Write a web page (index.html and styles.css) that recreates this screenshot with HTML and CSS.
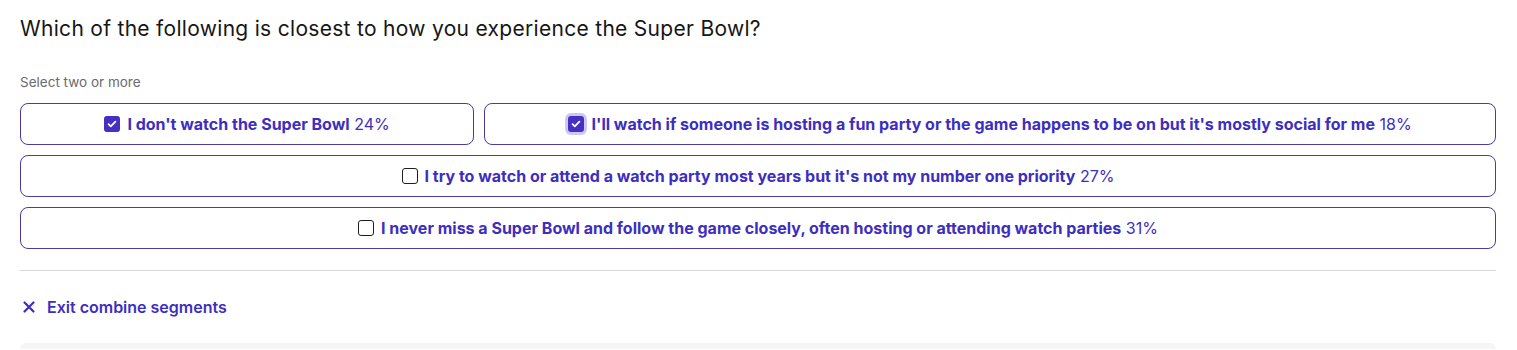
FILE: index.html
```html
<!DOCTYPE html>
<html lang="en">
<head>
<meta charset="utf-8">
<title>Super Bowl question</title>
<link rel="stylesheet" href="styles.css">
</head>
<body>
<main class="panel">
  <h1 class="question">Which of the following is closest to how you experience the Super Bowl?</h1>
  <p class="hint">Select two or more</p>
  <div class="options">
    <label class="option">
      <span class="box checked"><svg viewBox="0 0 16 16" width="16" height="16"><path d="M4.6 8.2l2.2 2.1 4.6-4.6" fill="none" stroke="#fff" stroke-width="1.8" stroke-linecap="round" stroke-linejoin="round"/></svg></span>
      <span class="text"><b>I don't watch the Super Bowl</b> 24%</span>
    </label>
    <label class="option">
      <span class="box checked focus"><svg viewBox="0 0 16 16" width="16" height="16"><path d="M4.6 8.2l2.2 2.1 4.6-4.6" fill="none" stroke="#fff" stroke-width="1.8" stroke-linecap="round" stroke-linejoin="round"/></svg></span>
      <span class="text"><b>I'll watch if someone is hosting a fun party or the game happens to be on but it's mostly social for me</b> 18%</span>
    </label>
    <label class="option">
      <span class="box"></span>
      <span class="text"><b>I try to watch or attend a watch party most years but it's not my number one priority</b> 27%</span>
    </label>
    <label class="option">
      <span class="box"></span>
      <span class="text"><b>I never miss a Super Bowl and follow the game closely, often hosting or attending watch parties</b> 31%</span>
    </label>
  </div>
  <hr class="divider">
  <button class="exit" type="button">
    <svg viewBox="0 0 14 14" width="14" height="14"><path d="M2.5 2.5l9 9M11.5 2.5l-9 9" fill="none" stroke="#3d2ec0" stroke-width="2.2" stroke-linecap="round"/></svg>
    <span>Exit combine segments</span>
  </button>
  <div class="next-card"></div>
</main>
</body>
</html>
```
FILE: styles.css
```css
* { box-sizing: border-box; }
html, body { margin: 0; background: #fff; }
body {
  font-family: Inter, "Noto Sans", "DejaVu Sans", sans-serif;
  color: #1a1a1a;
  overflow: hidden;
}
.panel {
  padding: 16px 21px 0 20px;
}
.question {
  margin: 0;
  font-size: 21px;
  letter-spacing: 0.3px;
  line-height: 26px;
  font-weight: 400;
  color: #161616;
}
.hint {
  margin: 32px 0 0;
  font-size: 13.5px;
  line-height: 17px;
  color: #6b6b6b;
}
.options {
  margin-top: 12px;
  display: flex;
  flex-wrap: wrap;
  gap: 10px;
}
.option {
  flex: 1 1 auto;
  display: flex;
  align-items: center;
  justify-content: center;
  gap: 7px;
  height: 42px;
  padding: 0 12px;
  border: 1px solid #4b3aa6;
  border-radius: 8px;
  font-size: 16px;
  color: #3d2ec0;
  cursor: pointer;
}
.text b { font-weight: 700; }
.box {
  width: 16px;
  height: 16px;
  border-radius: 3px;
  border: 1.5px solid #1f1f1f;
  background: #fff;
  display: flex;
  align-items: center;
  justify-content: center;
  flex: none;
}
.box.checked {
  border: none;
  background: #4530c4;
}
.box.focus {
  box-shadow: 0 0 0 3px #cdc8f3;
}
.divider {
  margin: 21px 0 0;
  border: none;
  border-top: 1px solid #d9d9d9;
}
.exit {
  margin-top: 26px;
  padding: 0;
  border: none;
  background: none;
  display: flex;
  align-items: center;
  gap: 11px;
  font-family: inherit;
  font-size: 16px;
  font-weight: 600;
  color: #3d2ec0;
  cursor: pointer;
}
.exit svg { margin-left: 2px; }
.next-card {
  margin-top: 26px;
  height: 6px;
  background: #f6f6f7;
  border-radius: 6px 6px 0 0;
}
```
